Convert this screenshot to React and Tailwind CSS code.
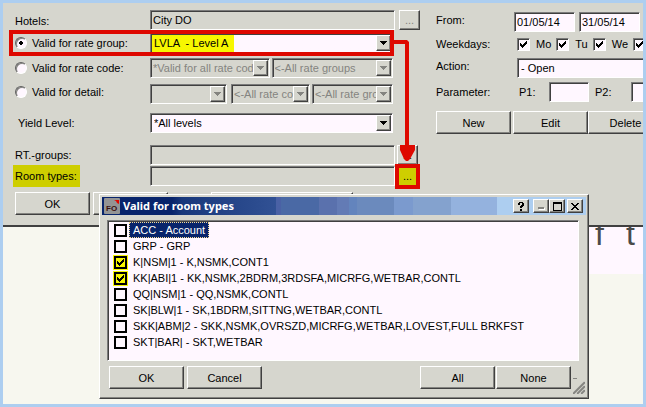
import React, { useState } from 'react';
import clsx from 'clsx';

const sunken = 'border border-t-[#7b7b7b] border-l-[#7b7b7b] border-b-white border-r-white';
const inset = 'shadow-[inset_1px_1px_0_#404040]';
const raised =
  'border border-t-white border-l-white border-b-[#404040] border-r-[#404040] shadow-[inset_-1px_-1px_0_#848480]';

const Button = ({ className, children, ...props }) => (
  <button
    type="button"
    className={clsx('flex items-center justify-center bg-[#d6d6ce]', raised, className)}
    {...props}
  >
    {children}
  </button>
);

const Select = ({ label, value, disabled, marked, arrow = true, className }) => (
  <div className={clsx('relative flex h-5 min-w-0', className)}>
    <select
      aria-label={label}
      disabled={disabled}
      className={clsx(
        'w-full appearance-none rounded-none opacity-100',
        arrow && 'pr-3',
        disabled ? 'bg-[#d6d6ce] pl-0.5 text-[#848480]' : 'bg-[#fff7ff] pl-[3px] text-black',
        marked && 'bg-linear-to-r from-[#f7f700] from-[83px] to-[#fff7ff] to-[83px]',
        sunken,
        inset
      )}
    >
      <option>{value}</option>
    </select>
    {arrow && (
      <span
        className={clsx(
          'pointer-events-none absolute top-0.5 right-0.5 bottom-0.5 flex w-[15px] items-center justify-center bg-[#d6d6ce]',
          raised
        )}
      >
        <svg width="7" height="4" viewBox="0 0 7 4" fill={disabled ? '#848480' : '#000'} shapeRendering="crispEdges">
          <path d="M0 0h7v1H6v1H5v1H4v1H3V3H2V2H1V1H0z" />
        </svg>
      </span>
    )}
  </div>
);

const Radio = ({ id, label, checked, onChange }) => (
  <div className="flex items-center gap-[5px]">
    <input
      type="radio"
      id={id}
      name="scope"
      checked={checked}
      onChange={onChange}
      className="h-3 w-3 shrink-0 appearance-none rounded-full border border-t-[#606060] border-r-white border-b-white border-l-[#606060] bg-[#fff7ff] bg-[radial-gradient(#000_2px,transparent_2px)] shadow-[inset_1px_1px_0_#848480] not-checked:bg-none"
    />
    <label htmlFor={id}>{label}</label>
  </div>
);

const Tick = () => (
  <svg
    className="pointer-events-none col-start-1 row-start-1 m-auto"
    width="7"
    height="7"
    viewBox="0 0 7 7"
    shapeRendering="crispEdges"
  >
    <path d="M0 2h1v1h1v1h1V3h1V2h1V1h1V0h1v3H6v1H5v1H4v1H3v1H2V6H1V5H0z" />
  </svg>
);

const Weekday = ({ name, label }) => {
  const [on, setOn] = useState(true);
  return (
    <label className="flex shrink-0 items-center gap-[6px]">
      <span className="grid">
        <input
          type="checkbox"
          aria-label={label}
          checked={on}
          onChange={() => setOn(!on)}
          className={clsx('col-start-1 row-start-1 h-[13px] w-[13px] appearance-none bg-[#fff7ff]', sunken, inset)}
        />
        {on && <Tick />}
      </span>
      {name}
    </label>
  );
};

const ROOM_TYPES = [
  { name: 'ACC - Account', selected: true },
  { name: 'GRP - GRP' },
  { name: 'K|NSM|1 - K,NSMK,CONT1', checked: true },
  { name: 'KK|ABI|1 - KK,NSMK,2BDRM,3RDSFA,MICRFG,WETBAR,CONTL', checked: true },
  { name: 'QQ|NSM|1 - QQ,NSMK,CONTL' },
  { name: 'SK|BLW|1 - SK,1BDRM,SITTNG,WETBAR,CONTL' },
  { name: 'SKK|ABM|2 - SKK,NSMK,OVRSZD,MICRFG,WETBAR,LOVEST,FULL BRKFST' },
  { name: 'SKT|BAR| - SKT,WETBAR' },
];

const RateForm = () => {
  const [scope, setScope] = useState('group');

  return (
    <div className="relative min-w-0 flex-1 pt-[7px] pr-1 pl-3">
      <div className="flex gap-1">
        <label htmlFor="hotels" className="w-[131px] shrink-0 pt-[3px]">Hotels:</label>
        <input id="hotels" readOnly defaultValue="City DO" className={clsx('h-5 min-w-0 flex-1 pl-0.5', sunken, inset)} />
        <Button aria-label="Choose hotels" className="h-5 w-[21px] text-[#848480]">...</Button>
      </div>
      <div className="mt-[3px] grid grid-cols-[135px_1fr] items-center pr-[27px]">
        <Radio id="scope-group" label="Valid for rate group:" checked={scope === 'group'} onChange={() => setScope('group')} />
        <Select label="Rate group" value={'LVLA \u00a0- Level A'} marked />
      </div>
      <div className="mt-[5px] grid grid-cols-[135px_1fr_1fr] items-center pr-[27px]">
        <Radio id="scope-code" label="Valid for rate code:" checked={scope === 'code'} onChange={() => setScope('code')} />
        <Select label="Rate code" value="*Valid for all rate cod" disabled className="mr-0.5" />
        <Select label="Rate code group" value="<-All rate groups" disabled />
      </div>
      <div className="mt-[6px] grid grid-cols-[135px_1fr_1fr_1fr] items-start pr-[27px]">
        <Radio id="scope-detail" label="Valid for detail:" checked={scope === 'detail'} onChange={() => setScope('detail')} />
        <Select label="Detail" value="" disabled className="mr-1" />
        <Select label="Detail code" value="<-All rate co" disabled className="mr-0.5" />
        <Select label="Detail group" value="<-All rate gro" disabled />
      </div>
      <div className="mt-[9px] grid grid-cols-[135px_1fr] items-center pr-[27px]">
        <span className="pl-[3px]">Yield Level:</span>
        <Select label="Yield level" value="*All levels" />
      </div>
      <div className="mt-3 flex items-center">
        <label htmlFor="groups" className="w-[135px] shrink-0">RT.-groups:</label>
        <input id="groups" readOnly className={clsx('mr-0.5 h-5 min-w-0 flex-1', sunken, inset)} />
        <Button aria-label="Choose groups" className="mr-0.5 h-5 w-[21px]">...</Button>
      </div>
      <div className="mt-px flex items-center">
        <label htmlFor="types" className="-my-px mr-[70px] -ml-0.5 w-[67px] shrink-0 bg-[#cece00] py-[3px] pl-0.5 whitespace-nowrap">
          Room types:
        </label>
        <input id="types" readOnly className={clsx('h-5 min-w-0 flex-1', sunken, inset)} />
        <button
          type="button"
          aria-label="Choose room types"
          className="-my-1 h-[25px] w-[25px] border-4 border-[#de0800] bg-[#cece00] leading-4"
        >
          ...
        </button>
      </div>
      <div className="mt-[6px] flex gap-[3px]">
        <Button className="h-[23px] w-[75px]">OK</Button>
        <Button aria-label="Close" className="h-[23px] w-[75px]" />
        <Button aria-label="Options" className="ml-10 h-[23px] w-[142px]" />
      </div>

      {/* Highlight around the rate group and arrow to the room types button */}
      <div className="pointer-events-none absolute top-[27px] right-[30px] left-[6px] h-[26px] border-4 border-[#de0800]" />
      <svg className="pointer-events-none absolute top-[37px] right-0 h-[122px] w-[30px]" viewBox="0 0 30 122" fill="#de0800">
        <path d="M0 0h13l2 2v103h6v5l-5 9-2 2h-2l-2-2-4-9v-5h5V4H0z" />
      </svg>
    </div>
  );
};

const PeriodForm = () => (
  <div className="w-[219px] shrink-0 overflow-hidden pt-[9px] pl-3">
    <div className="flex gap-1">
      <label htmlFor="from" className="w-[74px] shrink-0">From:</label>
      <input id="from" defaultValue="01/05/14" className={clsx('h-5 w-[61px] shrink-0 bg-[#fff7ff] pl-0.5', sunken, inset)} />
      <input aria-label="To" defaultValue="31/05/14" className={clsx('h-5 w-[61px] shrink-0 bg-[#fff7ff] pl-0.5', sunken, inset)} />
    </div>
    <div className="mt-1 flex items-center gap-[5px]">
      <span className="w-[76px] shrink-0">Weekdays:</span>
      <Weekday name="Mo" />
      <Weekday name="Tu" />
      <Weekday name="We" />
      <Weekday label="Thursday" />
    </div>
    <div className="mt-[6px] flex">
      <span className="w-[81px] shrink-0">Action:</span>
      <Select label="Action" value="- Open" arrow={false} className="w-[180px] shrink-0" />
    </div>
    <div className="mt-1 flex items-center">
      <span className="w-[83px] shrink-0">Parameter:</span>
      <label htmlFor="p1" className="w-[30px] shrink-0">P1:</label>
      <input id="p1" className={clsx('mr-[6px] h-5 w-10 shrink-0 bg-[#fff7ff]', sunken, inset)} />
      <label htmlFor="p2" className="w-9 shrink-0">P2:</label>
      <input id="p2" className={clsx('h-5 w-10 shrink-0 bg-[#fff7ff]', sunken, inset)} />
    </div>
    <div className="mt-[9px] flex">
      <Button className="mr-0.5 h-[23px] w-[75px] shrink-0">New</Button>
      <Button className="h-[23px] w-[75px] shrink-0">Edit</Button>
      <Button className="h-[23px] w-[75px] shrink-0">Delete</Button>
    </div>
  </div>
);

const RoomTypeDialog = () => {
  const [checked, setChecked] = useState(ROOM_TYPES.map((t) => !!t.checked));
  const toggle = (i) => setChecked(checked.map((c, n) => (n === i ? !c : c)));
  const setAll = (value) => setChecked(checked.map(() => value));

  return (
    <div
      role="dialog"
      aria-label="Valid for room types"
      className={clsx('absolute top-[191px] left-24 w-[490px] bg-[#d6d6ce] p-0.5', raised)}
    >
      <div className="flex h-[18px] items-center bg-[linear-gradient(90deg,#08246b_0,#08246b_70px,#18387b_80px,#315194_174px,#4a61a5_174px,#4a61a5_179px,#4a69a5_179px,#4a69a5_217px,#5a71ad_217px,#5a71ad_235px,#637bb5_235px,#637bb5_247px,#6384bd_247px,#6384bd_255px,#6b8abd_255px,#6b8abd_292px,#7b9ace_292px,#7b9ace_311px,#84a2ce_311px,#84a2ce_349px,#94b2de_349px,#94b2de_395px,#adcef0_395px)] pl-0.5">
        <svg className="mr-[3px]" width="16" height="16" viewBox="0 0 16 16">
          <rect width="16" height="16" rx="1" fill="#949494" />
          <text x="2" y="13" fontSize="8" fontWeight="bold" fill="#3a1010">FO</text>
          <path d="M10 2h5v4l-2-1-1-2z" fill="#e00800" />
        </svg>
        <h2 className="flex-1 font-['Noto_Sans',sans-serif] text-[11px] font-bold text-white">Valid for room types</h2>
        <Button aria-label="Help" className="mr-1 h-[14px] w-4">
          <svg width="6" height="9" viewBox="0 0 6 9" shapeRendering="crispEdges">
            <path d="M1 0h4v1h1v3H5v1H4v1H2V4h1V3h1V1H2v2H0V1h1zM2 7h2v2H2z" />
          </svg>
        </Button>
        <Button aria-label="Minimize" className="h-[14px] w-4">
          <svg width="9" height="8" viewBox="0 0 9 8" shapeRendering="crispEdges">
            <path d="M2 6h6v2H2z" fill="#fff" />
            <path d="M1 5h6v2H1z" fill="#848480" />
          </svg>
        </Button>
        <Button aria-label="Maximize" className="mr-0.5 h-[14px] w-4">
          <svg width="9" height="9" viewBox="0 0 9 9" shapeRendering="crispEdges">
            <path d="M0 0h9v9H0zM1 2v6h7V2z" fillRule="evenodd" />
          </svg>
        </Button>
        <Button aria-label="Close dialog" className="mr-[3px] h-[14px] w-4">
          <svg width="8" height="7" viewBox="0 0 8 7" shapeRendering="crispEdges">
            <path d="M0 0h2v1h1v1h2V1h1V0h2v1H7v1H6v1H5v1h1v1h1v1h1v1H6V6H5V5H3v1H2v1H0V6h1V5h1V4h1V3H2V2H1V1H0z" />
          </svg>
        </Button>
      </div>

      <ul className={clsx('mt-[5px] mr-[7px] ml-[5px] h-[141px] bg-[#fff7ff] pt-px pl-[5px]', sunken, inset)}>
        {ROOM_TYPES.map((type, i) => (
          <li key={type.name}>
            <label className="flex h-4 items-center gap-px">
              <span className={clsx('grid p-px', checked[i] && 'bg-[#f7f700]')}>
                <input
                  type="checkbox"
                  checked={checked[i]}
                  onChange={() => toggle(i)}
                  className="col-start-1 row-start-1 h-[13px] w-[13px] appearance-none border-2 border-black"
                />
                {checked[i] && <Tick />}
              </span>
              <span
                className={clsx(
                  'h-4 border px-[3px] leading-[14px] whitespace-nowrap',
                  type.selected ? 'border-dotted border-[#f7db94] bg-[#08246b] text-white' : 'border-transparent'
                )}
              >
                {type.name}
              </span>
            </label>
          </li>
        ))}
      </ul>

      <div className="mt-[5px] flex items-end pb-[7px] pl-[7px]">
        <Button className="mr-[3px] h-[23px] w-[75px]">OK</Button>
        <Button className="h-[23px] w-[75px]">Cancel</Button>
        <Button className="mr-px ml-auto h-[23px] w-[75px]" onClick={() => setAll(true)}>All</Button>
        <Button className="h-[23px] w-[75px]" onClick={() => setAll(false)}>None</Button>
        <svg className="mr-px -mb-[5px] ml-0.5 h-4 w-3" viewBox="0 0 12 16">
          <path d="M0 0h4v1H0z" fill="#848480" />
          <path d="M-1 16L12 3M3 16l9-9M7 16l5-5" stroke="#fff" />
          <path d="M0 16L12 4M4 16l8-8M8 16l4-4" stroke="#848480" strokeWidth="2" />
        </svg>
      </div>
    </div>
  );
};

export default function App() {
  return (
    <div className="relative flex min-h-screen flex-col overflow-hidden border-3 border-[#adcef0] bg-[#f7f7ef] font-['Liberation_Sans',Arial,sans-serif] text-[11px] leading-4 text-black">
      <main className="flex border-b-2 border-[#404040] bg-[#d6d6ce] pb-[10px]">
        <RateForm />
        <PeriodForm />
      </main>
      <div className="flex h-[47px] items-end justify-end overflow-hidden">
        <div className="flex h-full w-[60px] gap-[22px] bg-[#fff7ff] pl-3 text-[32px] leading-[14px] text-[#4a4a4a]">
          <span>f</span>
          <span>t</span>
        </div>
      </div>
      <RoomTypeDialog />
    </div>
  );
}
